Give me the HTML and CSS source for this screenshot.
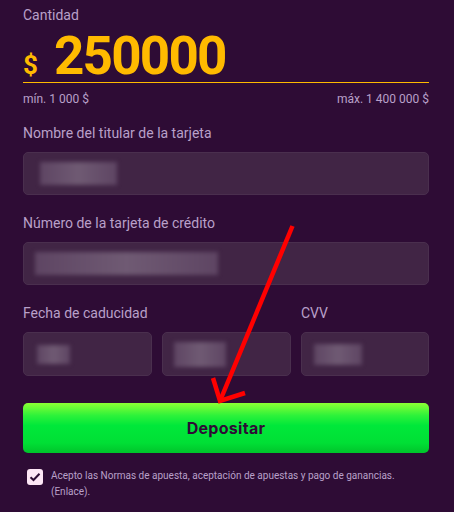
FILE: index.html
```html
<!DOCTYPE html>
<html lang="es">
<head>
  <meta charset="UTF-8" />
  <meta name="viewport" content="width=device-width, initial-scale=1.0"/>
  <title>Depositar</title>
  <link rel="stylesheet" href="styles.css">
</head>
<body>

  <div class="form">
    <div class="amount-label">Cantidad</div>
    <div class="amount">
      <span class="currency">$</span>
      <span class="value">250000</span>
    </div>
    <div class="limits">
      <span>mín. 1 000 $</span>
      <span>máx. 1 400 000 $</span>
    </div>

    <div class="field">
      <div class="label">Nombre del titular de la tarjeta</div>
      <div class="input"><span class="blur blur-name"></span></div>
    </div>

    <div class="field">
      <div class="label">Número de la tarjeta de crédito</div>
      <div class="input"><span class="blur blur-card"></span></div>
    </div>

    <div class="row">
      <div class="field expiry">
        <div class="label">Fecha de caducidad</div>
        <div class="pair">
          <div class="input"><span class="blur blur-month"></span></div>
          <div class="input"><span class="blur blur-year"></span></div>
        </div>
      </div>
      <div class="field cvv">
        <div class="label">CVV</div>
        <div class="input"><span class="blur blur-cvv"></span></div>
      </div>
    </div>

    <button class="deposit">Depositar</button>

    <label class="terms">
      <span class="check">
        <svg width="12" height="10" viewBox="0 0 12 10"><path d="M1.5 5.2 L4.5 8 L10.5 1.8" fill="none" stroke="#2e0c35" stroke-width="2"/></svg>
      </span>
      <span>Acepto las Normas de apuesta, aceptación de apuestas y pago de ganancias. (Enlace).</span>
    </label>
  </div>

  <!-- flecha roja dibujada encima -->
  <svg class="arrow" width="454" height="512" viewBox="0 0 454 512">
    <path d="M292.5 226 L220 401" stroke="#ff0000" stroke-width="4.5" fill="none"/>
    <path d="M213 378 L220 401 L245 393" stroke="#ff0000" stroke-width="4.5" fill="none"/>
  </svg>

</body>
</html>
```

FILE: styles.css
```css
body {
  margin: 0;
  background-color: #2e0c35;
  font-family: Roboto, "Liberation Sans", sans-serif;
  color: #b9a0c9;
  overflow: hidden;
}

.form {
  width: 406px;
  padding: 6px 0 0 23px;
}

.amount-label {
  font-size: 14px;
  line-height: 18px;
}

.amount {
  display: flex;
  align-items: baseline;
  height: 52px;
  margin-top: 6px;
  border-bottom: 1px solid #ffba00;
  color: #ffba00;
  font-weight: 700;
}

.currency {
  font-size: 26px;
  width: 31px;
  line-height: 52px;
}

.value {
  font-size: 53px;
  line-height: 52px;
  letter-spacing: -1.8px;
}

.limits {
  display: flex;
  justify-content: space-between;
  font-size: 12px;
  line-height: 14px;
  margin-top: 9px;
}

.field {
  margin-top: 18px;
}

.field + .field,
.row {
  margin-top: 19px;
}

.row .field {
  margin-top: 0;
}

.label {
  font-size: 14px;
  line-height: 18px;
  margin-bottom: 10px;
}

.input {
  height: 43px;
  background: #412545;
  border: 1px solid #4a2f4e;
  border-radius: 5px;
  box-sizing: border-box;
  display: flex;
  align-items: center;
  padding-left: 16px;
}

.blur {
  display: block;
  height: 23px;
  background: linear-gradient(90deg, #5e4563, #6f5a73 50%, #5e4563);
  filter: blur(2px);
}

.blur-name { width: 77px; }
.blur-card { width: 183px; margin-left: -5px; }
.blur-month { width: 33px; margin-left: -3px; height: 19px; }
.blur-year { width: 52px; margin-left: -5px; height: 25px; }
.blur-cvv { width: 48px; margin-left: -4px; height: 21px; }

.row {
  display: flex;
  gap: 10px;
}

.expiry {
  width: 268px;
}

.pair {
  display: flex;
  gap: 10px;
}

.pair .input {
  flex: 1;
  height: 44px;
}

.cvv {
  flex: 1;
}

.cvv .input {
  height: 44px;
}

.deposit {
  display: block;
  width: 100%;
  height: 50px;
  margin-top: 27px;
  border: none;
  border-radius: 5px;
  background: linear-gradient(180deg, #8cff34 0%, #2df23a 25%, #00e83a 45%, #00df35 80%, #00c42b 100%);
  color: #2e0c35;
  font-family: Inter, "Open Sans", sans-serif;
  font-weight: 700;
  font-size: 16px;
  letter-spacing: 0.3px;
  cursor: pointer;
}

.terms {
  display: flex;
  gap: 8px;
  margin-top: 15px;
  padding-left: 4px;
  font-size: 10px;
  line-height: 16px;
}

.check {
  flex: none;
  width: 16px;
  height: 16px;
  margin-top: 1px;
  border-radius: 3px;
  background: #fde6f5;
  display: flex;
  align-items: center;
  justify-content: center;
}

.arrow {
  position: absolute;
  top: 0;
  left: 0;
  pointer-events: none;
}
```
